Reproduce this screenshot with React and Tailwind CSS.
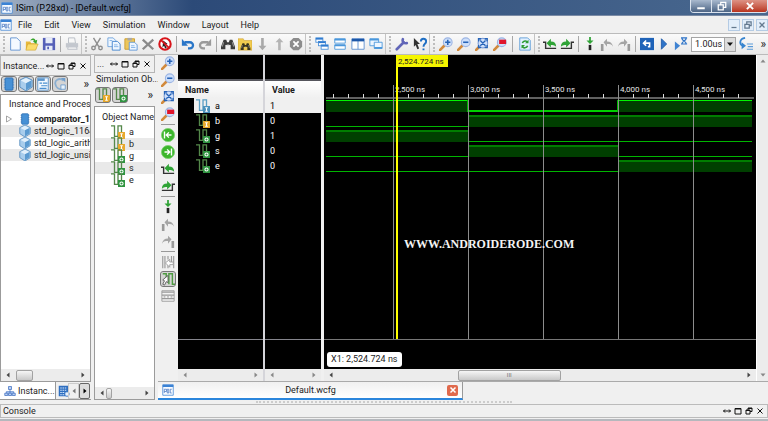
import React from 'react';
import clsx from 'clsx';

const Icon = ({ children, className = 'size-[14px]' }) => (
  <svg viewBox="0 0 16 16" className={clsx('shrink-0', className)} fill="none" aria-hidden="true">
    {children}
  </svg>
);

const Binoculars = ({ color = '#3c3c3c' }) => (
  <>
    <path d="M3 3h3l1 3h2l1-3h3l3 8v3h-5V9H5v5H0v-3z" fill={color} />
    <path d="M3 6l-1.500 5M13 6l1.500 5M6.500 9h3" stroke="#aaa" />
  </>
);

const Lens = ({ children }) => (
  <>
    <path d="M1 15l5-5" stroke="#d28a3c" strokeWidth="3" strokeLinecap="round" />
    <circle cx="10" cy="6" r="5" fill="#cfe0fa" stroke="#9bb4e4" strokeWidth="1.200" />
    {children}
  </>
);

const Windows = () => (
  <>
    {[[1, 1], [4, 5], [7, 9]].map(([x, y]) => (
      <g key={x}>
        <rect x={x} y={y} width="8" height="5" fill="#fff" stroke="#4a90d9" />
        <path d={`M${x} ${y + 1}h8`} stroke="#2f7bd0" strokeWidth="2" />
      </g>
    ))}
  </>
);

const icons = {
  newFile: (
    <path d="M3 1h7l4 4v10H3z" fill="#f4f9ff" stroke="#5b8fd0" />
  ),
  open: (
    <>
      <path d="M1 5h5l1 2h6v7H1z" fill="#e8b93c" />
      <path d="M3 8h12l-3 7H1z" fill="#fbdc6b" stroke="#c79a25" strokeWidth=".6" />
      <path d="M6 4c2-3 5-3 6 0l2-1-1 5-4-3 1.500-.5C9.500 3 8 3 6 4z" fill="#3aa52c" />
    </>
  ),
  save: (
    <>
      <path d="M1 1h14v14H1z" fill="#5660b8" />
      <path d="M4 1h8v6H4zM4 10h8v5H4z" fill="#e6ebf8" />
      <path d="M6 11h2v3H6z" fill="#5660b8" />
    </>
  ),
  print: (
    <>
      <path d="M4 1h7l1 6H4zM4 10h8l2 4H3z" fill="#f7f7f7" stroke="#b5bac2" />
      <path d="M1 7h14v5H1z" fill="#c3c7ce" />
    </>
  ),
  cut: (
    <g stroke="#8e8e8e" strokeWidth="1.600">
      <path d="M4 1l6 10M12 1L6 11" />
      <circle cx="4" cy="12.500" r="2" />
      <circle cx="12" cy="12.500" r="2" />
    </g>
  ),
  copy: (
    <>
      <path d="M1 1h6l3 3v7H1z" fill="#eef6ff" stroke="#6ba0dc" />
      <path d="M6 5h6l3 3v7H6z" fill="#eef6ff" stroke="#3e80cc" />
      <path d="M8 9h4M8 11h5M3 4h3" stroke="#7fb0e6" />
    </>
  ),
  paste: (
    <>
      <path d="M1 2h11v12H1z" fill="#edc65a" stroke="#c99a2c" />
      <path d="M4 1h5v3H4z" fill="#a9a9a9" />
      <path d="M6 6h6l3 3v6H6z" fill="#eef6ff" stroke="#5b95d6" />
      <path d="M8 10h4M8 12h5" stroke="#7fb0e6" />
    </>
  ),
  remove: <path d="M2 3l12 11M14 3L2 14" stroke="#8a8a8a" strokeWidth="2.600" />,
  stop: (
    <>
      <circle cx="8" cy="8" r="6.500" fill="#fff" stroke="#d8151b" strokeWidth="2.400" />
      <path d="M6 4l5 4-3 .5 2 4-2 .5-1-3-2 2z" fill="#222" />
      <path d="M3.500 3.500l9 9" stroke="#d8151b" strokeWidth="2.200" />
    </>
  ),
  undo: (
    <>
      <path d="M4 6h6c5 0 5 7 0 7H8" stroke="#2a76c8" strokeWidth="2.600" />
      <path d="M1 2v8h7z" fill="#2a76c8" />
    </>
  ),
  redo: (
    <>
      <path d="M12 6H6c-5 0-5 7 0 7h2" stroke="#9a9a9a" strokeWidth="2.600" />
      <path d="M15 2v8H8z" fill="#9a9a9a" />
    </>
  ),
  find: <Binoculars />,
  findFolder: (
    <>
      <path d="M0 2h6l1 2h9v11H0z" fill="#f2cc4f" stroke="#c99a2c" strokeWidth=".6" />
      <g transform="translate(3 5) scale(.7)"><Binoculars color="#3a341c" /></g>
    </>
  ),
  down: <path d="M7 1h3v9h3l-4.500 5L4 10h3z" fill="#a9a9a9" />,
  up: <path d="M7 15h3V6h3L8.500 1 4 6h3z" fill="#b4b4b4" />,
  cancel: (
    <>
      <path d="M5 1h6l4 4v6l-4 4H5l-4-4V5z" fill="#8c8c8c" />
      <path d="M5 5l6 6M11 5l-6 6" stroke="#fff" strokeWidth="2" />
    </>
  ),
  cascade: <Windows />,
  tileRows: (
    <g fill="#fff" stroke="#4a97dc">
      <path d="M2 2h12v5H2zM2 9h12v5H2z" />
      <path d="M2 3h12M2 9.500h12" strokeWidth="2" />
    </g>
  ),
  tileCols: (
    <g fill="#fff" stroke="#5a8ed0">
      <path d="M1 2h14v12H1zM8 2v12" />
      <path d="M1 3.500h14" stroke="#1c57a8" strokeWidth="3" />
    </g>
  ),
  floatWin: (
    <g fill="#eef6ff" stroke="#4a97dc">
      <path d="M1 2h10v8H1z" />
      <path d="M6 6h9v7H6z" />
      <path d="M1 3h10M6 12.500h9" strokeWidth="2" />
    </g>
  ),
  wrench: (
    <path d="M2 14l8-8M9 2.500c-1 3 1 5 4.500 4.500" stroke="#6166b8" strokeWidth="3" strokeLinecap="round" />
  ),
  help: (
    <>
      <path d="M1 1l7 7H5l2 5-2 1-2-5-2 2z" fill="#333" />
      <path d="M9 5c0-4 6-4 6 0 0 3-3 2.500-3 6M12 13v2" stroke="#1f6fc4" strokeWidth="2.200" />
    </>
  ),
  zoomIn: <Lens><path d="M7 6h6M10 3v6" stroke="#2764b8" strokeWidth="1.800" /></Lens>,
  zoomOut: <Lens><path d="M7 6h6" stroke="#2764b8" strokeWidth="1.800" /></Lens>,
  zoomFit: (
    <>
      <path d="M1 15l3-3" stroke="#d28a3c" strokeWidth="3" strokeLinecap="round" />
      <circle cx="9" cy="7" r="5.500" fill="#cfe0fa" stroke="#5f86cc" />
      <path d="M6 4l6 6M12 4l-6 6M4 5V2h3M11 2h3v3M14 9v3h-3M4 9v3h3" stroke="#2764b8" strokeWidth="1.500" />
    </>
  ),
  zoomSel: <Lens><path d="M7 3h8v5H7z" fill="#e0142a" /></Lens>,
  refresh: (
    <>
      <path d="M2 1h9l3 3v11H2z" fill="#e3f1ff" stroke="#5b9bd8" />
      <path d="M5 7c1-3 5-3 6-1M11 10c-1 3-5 3-6 1" stroke="#2f9c35" strokeWidth="1.800" />
      <path d="M12 3v4H8zM4 13V9h4z" fill="#2f9c35" />
    </>
  ),
  prevEdge: (
    <>
      <path d="M0 6h3v7h12" stroke="#333" strokeWidth="1.600" />
      <path d="M4 7l5-5v3c4 0 6 2 6 6-2-2-4-2-6-2v3z" fill="#2fa336" />
    </>
  ),
  nextEdge: (
    <>
      <path d="M1 13h12V6h3" stroke="#333" strokeWidth="1.600" />
      <path d="M12 7L7 2v3C3 5 1 7 1 11c2-2 4-2 6-2v3z" fill="#2fa336" />
    </>
  ),
  marker: (
    <>
      <path d="M7 0h2v4h3L8 8 4 4h3z" fill="#2fa336" />
      <path d="M6.500 9h3v6h-3z" fill="#222" />
    </>
  ),
  prevMarker: (
    <>
      <path d="M1 8h3v8H1z" fill="#9a9a9a" />
      <path d="M4 6l4-4v3c4 0 6 2 7 6-2-3-4-3-7-3v3z" fill="#a5a5a5" />
    </>
  ),
  nextMarker: (
    <>
      <path d="M12 8h3v8h-3z" fill="#9a9a9a" />
      <path d="M12 6L8 2v3C4 5 2 7 1 11c2-3 4-3 7-3v3z" fill="#a5a5a5" />
    </>
  ),
  restart: (
    <>
      <path d="M0 1h16v14H0z" fill="#1f63b8" />
      <path d="M4 7h7v4H9M7 4L4 7l3 3" stroke="#fff" strokeWidth="1.800" />
    </>
  ),
  play: <path d="M5 2l6 6-6 6z" fill="#2f74c8" stroke="#1f5aa8" />,
  playFor: (
    <>
      <path d="M1 5l6 5-6 5z" fill="#3f83d2" />
      <path d="M8 1h7M8 8h7M9 1c0 4 5 3 5 7M14 1c0 4-5 3-5 7" stroke="#2f74c8" strokeWidth="1.400" />
    </>
  ),
  step: (
    <>
      <path d="M7 1C0 2 0 9 5 10" stroke="#3784cf" strokeWidth="2" />
      <path d="M3 6l5 4-5 4z" fill="#3784cf" />
      <path d="M9 8h7M10 11h6M9 14h7" stroke="#5a9bd9" strokeWidth="1.400" />
    </>
  ),
  goStart: (
    <>
      <circle cx="8" cy="8" r="7.500" fill="#3cb62c" stroke="#7fd071" />
      <path d="M4 4v8M12 8H6M9 5L6 8l3 3" stroke="#fff" strokeWidth="1.600" />
    </>
  ),
  goEnd: (
    <>
      <circle cx="8" cy="8" r="7.500" fill="#3cb62c" stroke="#7fd071" />
      <path d="M12 4v8M4 8h6M7 5l3 3-3 3" stroke="#fff" strokeWidth="1.600" />
    </>
  ),
  swap: (
    <>
      <path d="M2 1v14M4.500 1v14M12 1v7M14.500 1v14M8 1v4M8 11v4" stroke="#999" strokeWidth="1.300" />
      <path d="M5 9l5-4v3h4v3h-4v3z" fill="#fff" stroke="#999" />
    </>
  ),
  snap: (
    <>
      <path d="M2 2h4v4M9 14V2h4v12h3" stroke="#4d9a40" strokeWidth="1.600" />
      <path d="M8 4L2 9l2 1-2 4 2 1 2-4 2 1z" fill="#fff" stroke="#555" />
    </>
  ),
  table: (
    <>
      <path d="M1 2h14v12H1z" fill="#f3f3f3" stroke="#999" />
      <path d="M1 3.500h14M1 7h14M1 11h14" stroke="#999" strokeWidth="1.400" />
      <path d="M3 9h10" stroke="#bbb" strokeDasharray="2 2" strokeWidth="2" />
    </>
  ),
  chip: (
    <>
      <path d="M2 3h12M2 6h12M2 9h12M2 12h12" stroke="#8ab2dc" strokeWidth="1.400" />
      <rect x="3.500" y="1" width="9" height="14" rx="1" fill="#4791d6" stroke="#2a6cb0" />
    </>
  ),
  cube: (
    <>
      <path d="M8 0l7 3.500v8L8 16l-7-4.500v-8z" fill="#a9cdec" stroke="#4e87bb" />
      <path d="M8 1l6 3-6 3-6-3z" fill="#e2f0fb" />
      <path d="M8 7l6-3v7l-6 4z" fill="#5b9ad0" />
    </>
  ),
  list: (
    <>
      <path d="M2 1h12v14H2z" fill="#f1f8ff" stroke="#5b95cc" />
      <path d="M2 3h8" stroke="#5b95cc" strokeWidth="3" />
      <path d="M4 7h3M8 7h5M6 10h7M4 13h8" stroke="#4a8fd0" strokeWidth="1.400" />
    </>
  ),
  process: (
    <>
      <path d="M12 4C7 0 1 4 3 9c1 4 5 5 7 5" stroke="#8aaed0" strokeWidth="2" />
      <path d="M9 1h5v5z" fill="#6e9dcc" />
      <path d="M9 9h5v5H9z" fill="#e8f3fc" stroke="#6e9dcc" />
    </>
  ),
  hierarchy: (
    <g stroke="#3f6fc0" fill="#b9d0f4">
      <path d="M8 6v3M3 11V9h10v2" />
      <path d="M6 2h4v4H6zM1 11h4v3H1zM6 11h4v3H6zM11 11h4v3h-4zM8 9v2" />
    </g>
  ),
  grid: (
    <>
      <path d="M1 1h13v14H1z" fill="#2f6fc0" />
      <path d="M3 4h9M3 7h9M3 10h9M3 13h9" stroke="#d4e7fb" strokeDasharray="2 1" strokeWidth="1.600" />
      <circle cx="12" cy="12" r="3" fill="#e9f2fc" stroke="#2f6fc0" />
    </>
  ),
  wave: (
    <>
      <path d="M1 1h14v14H1z" fill="#f6faff" stroke="#3b82d4" />
      <path d="M1 2.500h14" stroke="#3b82d4" strokeWidth="3" />
      <path d="M3 12V7h3v3H3M7 12V7h2v5H7M13 7h-2v5h2" stroke="#4a78c0" />
    </>
  ),
};

// Signal glyph: a pulse with the port direction in a small badge
const SignalIcon = ({ kind }) => {
  const badge = { in: '#e8a92c', out: '#2f9440', sel: '#4c93bd' }[kind];
  const line = kind === 'sel' ? '#5b9fc4' : '#54884a';
  return (
    <Icon>
      <path d="M0 1h4v12h4V1h4v8" stroke={line} strokeWidth="1.500" />
      <rect x="8" y="8" width="8" height="8" fill={badge} />
      {kind === 'out' ? (
        <circle cx="12" cy="12" r="1.800" stroke="#fff" strokeWidth="1.200" />
      ) : (
        <path d="M10.500 10h3M12 10v4M10.500 14h3" stroke="#fff" strokeWidth="1.200" />
      )}
    </Icon>
  );
};

const ToolButton = ({ name, active, label }) => (
  <button
    type="button"
    aria-label={label || name}
    className={clsx(
      'flex shrink-0 items-center justify-center',
      active && 'rounded-xs bg-[#d4d4d4] outline outline-[#777]'
    )}
  >
    <Icon>{icons[name]}</Icon>
  </button>
);

const Sep = () => <span className="mx-px h-4 w-px shrink-0 bg-[#a8a8a8]" />;
const Grip = () => <span className="h-4 shrink-0 border-l-2 border-dotted border-[#bdbdbd]" />;

const ToolGroup = ({ items, wide }) => (
  <div
    className={clsx(
      'flex shrink-0 items-center border-r border-[#c4c4c4] pr-[2px] pl-[3px]',
      wide ? 'gap-1' : 'gap-[3px]'
    )}
  >
    <Grip />
    {items.map((item, i) =>
      item === '|' ? <Sep key={i} /> : <ToolButton key={i} name={item} />
    )}
  </div>
);

const DockButtons = () => (
  <div className="flex shrink-0 items-center gap-[3px]">
    {[
      ['Resize', 'M1 8h14M4 5L1 8l3 3M12 5l3 3-3 3'],
      ['Maximize', 'M2 3h12v11H2zM2 4h12'],
      ['Float', 'M6 6V2h8v7h-4M2 6h8v8H2zM2 7h8M6 3h8'],
      ['Close', 'M3 3l10 10M13 3L3 13'],
    ].map(([label, d]) => (
      <button key={label} type="button" aria-label={label}>
        <Icon className="size-[8px]">
          <path d={d} stroke="#111" strokeWidth="2" />
        </Icon>
      </button>
    ))}
  </div>
);

const Arrow = ({ dir, color = '#444' }) => {
  const d = {
    left: 'M11 3v10L5 8z',
    right: 'M5 3v10l6-5z',
    up: 'M3 11h10L8 5z',
    down: 'M3 5h10l-5 6z',
  }[dir];
  return (
    <button type="button" aria-label={`Scroll ${dir}`} className="flex shrink-0">
      <Icon className="size-[8px]"><path d={d} fill={color} /></Icon>
    </button>
  );
};

const HScroll = ({ thumb, color }) => (
  <div className="flex h-3 shrink-0 items-center bg-[#ececec] px-[3px]">
    <Arrow dir="left" color={color} />
    <div className="flex h-full flex-1 items-center">{thumb}</div>
    <Arrow dir="right" color={color} />
  </div>
);

const Thumb = ({ className, children }) => (
  <span
    className={clsx(
      'flex h-[11px] items-center justify-center rounded-xs border border-[#a2a2a2] bg-linear-to-b from-[#f6f6f6] to-[#c9c9c9]',
      className
    )}
  >
    {children}
  </span>
);

const instances = [
  { name: 'comparator_1', icon: 'chip', bold: true },
  { name: 'std_logic_1164', icon: 'cube' },
  { name: 'std_logic_arith', icon: 'cube' },
  { name: 'std_logic_unsi', icon: 'cube' },
];

const signals = [
  { name: 'a', kind: 'in', value: 1, bits: [1, 0, 1] },
  { name: 'b', kind: 'in', value: 0, bits: [0, 1, 1] },
  { name: 'g', kind: 'out', value: 1, bits: [1, 0, 0] },
  { name: 's', kind: 'out', value: 0, bits: [0, 1, 0] },
  { name: 'e', kind: 'out', value: 0, bits: [0, 0, 1] },
];

const InstancePanel = () => (
  <section className="flex w-[91px] shrink-0 flex-col">
    <div className="flex h-[21px] items-center justify-between border border-[#b5b5b5] pr-[3px] pl-[2px]">
      <span>Instance...</span>
      <DockButtons />
    </div>
    <div className="flex h-4 items-center justify-between px-[2px]">
      <div className="flex gap-[3px]">
        {['chip', 'cube', 'list', 'process'].map((n) => (
          <ToolButton key={n} name={n} active />
        ))}
      </div>
      <span className="text-[12px]">»</span>
    </div>
    <div className="mt-[2px] flex min-h-0 flex-1 flex-col overflow-hidden border border-[#9b9b9b] bg-white">
      <h2 className="flex h-[18px] items-center pl-2 whitespace-nowrap">Instance and Process</h2>
      <ul className="flex-1">
        {instances.map((item, i) => (
          <li
            key={item.name}
            className={clsx(
              'flex h-3 items-center whitespace-nowrap',
              i % 2 === 1 && 'bg-[#e9e9e9]',
              item.bold && 'font-bold'
            )}
          >
            <span className="flex w-[18px] shrink-0 pl-1">
              {item.bold && (
                <Icon className="size-[8px]"><path d="M3 2l10 6-10 6z" stroke="#888" strokeWidth="1.500" /></Icon>
              )}
            </span>
            <Icon className="size-[12px]">{icons[item.icon]}</Icon>
            <span className="pl-[3px]">{item.name}</span>
          </li>
        ))}
      </ul>
      <HScroll thumb={<Thumb className="ml-1 w-[17px]" />} />
    </div>
    <div className="flex h-[18px] shrink-0 items-center border-b border-[#999]">
      <button type="button" className="flex h-full w-[55px] items-center gap-[2px] bg-white pl-1">
        <Icon className="size-[12px]">{icons.hierarchy}</Icon>
        Instanc...
      </button>
      <button type="button" aria-label="Memory" className="flex h-full w-[13px] items-center border-l border-[#999] pl-[2px]">
        <Icon className="size-[12px]">{icons.grid}</Icon>
      </button>
      <span className="flex h-4 w-[11px] items-center justify-center border border-[#ccc]"><Arrow dir="left" color="#777" /></span>
      <span className="flex h-4 w-[11px] items-center justify-center rounded-xs border border-[#666] bg-[#ddd]"><Arrow dir="right" color="#000" /></span>
    </div>
  </section>
);

const ObjectPanel = () => (
  <section className="flex w-[61px] shrink-0 flex-col">
    <div className="flex h-[18px] items-center justify-between border border-[#b5b5b5] pr-[3px] pl-[2px]">
      <span>...</span>
      <DockButtons />
    </div>
    <span className="pl-[2px] whitespace-nowrap">Simulation Ob...</span>
    <div className="mt-px flex h-[18px] items-center justify-between px-[2px]">
      <div className="flex gap-[3px]">
        {['in', 'out'].map((kind) => (
          <button key={kind} type="button" aria-label={kind} className="rounded-xs bg-[#d4d4d4] outline outline-[#777]">
            <SignalIcon kind={kind} />
          </button>
        ))}
      </div>
      <span className="text-[12px]">»</span>
    </div>
    <div className="mt-[2px] flex min-h-0 flex-1 flex-col overflow-hidden border border-[#9b9b9b] bg-white">
      <h2 className="flex h-[19px] items-center pl-[7px] whitespace-nowrap">Object Name</h2>
      <ul className="flex-1">
        {signals.map((s, i) => (
          <li key={s.name} className={clsx('flex h-3 items-center gap-1 pl-[16px]', i % 2 === 1 && 'bg-[#e9e9e9]')}>
            <SignalIcon kind={s.kind} />
            {s.name}
          </li>
        ))}
      </ul>
      <HScroll thumb={<Thumb className="w-[6px]" />} />
    </div>
  </section>
);

const sideTools = [
  'zoomIn', 'zoomOut', 'zoomFit', 'zoomSel', '|',
  'goStart', 'goEnd', 'prevEdge', 'nextEdge', '|',
  'marker', 'prevMarker', 'nextMarker', '|',
  'swap', 'snap', 'table',
];

const SideToolbar = () => (
  <div className="flex w-5 shrink-0 flex-col items-center gap-[3px] bg-[#f0f0f0] pt-px">
    {sideTools.map((t, i) =>
      t === '|' ? (
        <span key={i} className="h-px w-[14px] bg-[#999]" />
      ) : (
        <ToolButton key={i} name={t} active={t === 'snap'} />
      )
    )}
  </div>
);

const Column = ({ title, className, children }) => (
  <div className={clsx('flex shrink-0 flex-col', className)}>
    <div className="h-[26px] border-b-2 border-[#55555c] bg-black" />
    <div className="flex h-[17px] items-center bg-linear-to-b from-white to-[#f0f0f0] pl-[7px] font-bold">
      {title}
    </div>
    <div className="flex-1 bg-black text-white">{children}</div>
    <div className="h-[30px] border-t border-[#85858c] bg-black" />
    <HScroll color="#888" />
  </div>
);

const Splitter = () => <div className="w-[2px] shrink-0 bg-[#d5d5da]" />;

// Horizontal positions inside the trace area, in pixels
const EDGES = [0, 142, 292, 426];
const GRID = [
  { x: 67, label: '2,500 ns' },
  { x: 142, label: '3,000 ns' },
  { x: 217, label: '3,500 ns' },
  { x: 292, label: '4,000 ns' },
  { x: 367, label: '4,500 ns' },
];
const TICKS = Array.from({ length: 28 }, (_, i) => 7 + i * 15);
const CURSOR_X = 70;

const Trace = ({ bits, row, selected }) => {
  const top = 45 + row * 15;
  const bright = selected ? '#00f500' : '#007d00';
  return (
    <g>
      {bits.map((bit, i) => {
        const x = EDGES[i];
        const w = EDGES[i + 1] - x;
        return bit ? (
          <g key={i}>
            <rect x={x} y={top} width={w} height="12" fill="#003f00" />
            <rect x={x} y={top} width={w} height={selected ? 1 : 2} fill={bright} />
          </g>
        ) : (
          <rect
            key={i}
            x={x}
            y={selected ? top + 10 : top + 11}
            width={w}
            height={selected ? 2 : 1}
            fill={selected ? '#00d000' : '#00b400'}
          />
        );
      })}
      {selected && <path d={`M141.5 ${top}v12M291.5 ${top}v12`} stroke="#00b400" />}
    </g>
  );
};

const WaveView = () => (
  <div className="flex min-w-0 flex-1 flex-col bg-black">
    <div className="flex min-h-0 flex-1 pl-[2px]">
      <svg className="h-full w-full" shapeRendering="crispEdges">
        <rect x="0" y="42" width="428" height="2" fill="#606060" />
        {TICKS.map((x) => (
          <rect key={x} x={x} y="39" width="1" height="4" fill="#ddd" />
        ))}
        {signals.map((s, i) => (
          <Trace key={s.name} bits={s.bits} row={i} selected={i === 0} />
        ))}
        {GRID.map(({ x, label }) => (
          <g key={x}>
            <line x1={x + 0.5} x2={x + 0.5} y1="30" y2="100%" stroke="#8c8c8c" />
            <text x={x + 2} y="37" fill="#e4e4e4" className="text-[8px]">{label}</text>
          </g>
        ))}
        <line x1={CURSOR_X + 1} x2={CURSOR_X + 1} y1="12" y2="100%" stroke="#ffff00" strokeWidth="2" />
        <rect x={CURSOR_X} y="0" width="52" height="12" fill="#f5f500" />
        <text x={CURSOR_X + 2} y="9" fill="#222" className="text-[8px]">2,524.724 ns</text>
        <text x="78" y="193" fill="#f4f4f4" className="font-['Liberation_Serif',serif] text-[12px] font-bold">
          WWW.ANDROIDERODE.COM
        </text>
      </svg>
    </div>
    <div className="flex h-[30px] shrink-0 items-center border-t border-[#777] pt-[9px] pl-[3px]">
      <span className="rounded-[3px] bg-white px-[4px] text-[9px] leading-[15px] text-[#222]">X1: 2,524.724 ns</span>
    </div>
    <HScroll
      thumb={
        <>
          <span className="w-[30%]" />
          <Thumb className="w-1/4 text-[6px] text-[#777]">III</Thumb>
        </>
      }
    />
  </div>
);

const Waveform = () => (
  <div className="flex min-w-0 flex-1">
    <Column title="Name" className="w-[85px]">
      <ul>
        {signals.map((s, i) => (
          <li key={s.name} className="flex h-[15px] pl-4">
            <span className={clsx('flex flex-1 items-center gap-[5px] pl-[2px]', i === 0 && 'bg-[#f0f0f0] text-black')}>
              <SignalIcon kind={i === 0 ? 'sel' : s.kind} />
              {s.name}
            </span>
          </li>
        ))}
      </ul>
    </Column>
    <Splitter />
    <Column title="Value" className="w-14">
      <ul>
        {signals.map((s, i) => (
          <li key={s.name} className={clsx('flex h-[15px] items-center pl-[5px]', i === 0 && 'bg-[#f0f0f0] text-black')}>
            {s.value}
          </li>
        ))}
      </ul>
    </Column>
    <div className="w-[3px] shrink-0 bg-[#f0f0f0]" />
    <WaveView />
    <div className="flex w-3 shrink-0 flex-col items-center justify-between border-l border-white bg-[#ececec] py-[2px]">
      <Arrow dir="up" color="#888" />
      <Arrow dir="down" color="#888" />
    </div>
  </div>
);

const TitleBar = () => (
  <header className="flex h-4 shrink-0 items-center justify-between border-b border-[#7b8ba5] bg-linear-to-r from-[#a3b1c4] from-0% via-[#2c4a78] via-25% to-[#49688f] pl-[1px]">
    <div className="flex items-center gap-[3px]">
      <Icon className="size-[12px]">{icons.wave}</Icon>
      <h1 className="text-[9px] text-black">ISim (P.28xd) - [Default.wcfg]</h1>
    </div>
    <div className="flex h-[13px] self-start overflow-hidden rounded-b-[4px] border border-t-0 border-[#dbe3ee]">
      <button type="button" aria-label="Minimize" className="flex w-[21px] items-center justify-center border-r border-[#dbe3ee] bg-linear-to-b from-[#a9b9ce] to-[#4d6585]">
        <Icon className="size-[10px]"><path d="M2 10h12v3H2z" fill="#fff" /></Icon>
      </button>
      <button type="button" aria-label="Restore" className="flex w-5 items-center justify-center border-r border-[#dbe3ee] bg-linear-to-b from-[#a9b9ce] to-[#4d6585]">
        <Icon className="size-[10px]"><path d="M6 5V2h8v8h-3M2 6h8v8H2z" stroke="#fff" strokeWidth="2" /></Icon>
      </button>
      <button type="button" aria-label="Close" className="flex w-[35px] items-center justify-center bg-linear-to-b from-[#dd9285] to-[#b8321c]">
        <Icon className="size-[10px]"><path d="M3 3l10 10M13 3L3 13" stroke="#fff" strokeWidth="3" /></Icon>
      </button>
    </div>
  </header>
);

const MenuBar = () => (
  <div className="flex h-[17px] shrink-0 items-center justify-between bg-[#f0f0f0]">
    <nav className="flex items-center">
      <Icon className="size-[12px]">{icons.wave}</Icon>
      <ul className="flex gap-3 pl-[6px]">
        {['File', 'Edit', 'View', 'Simulation', 'Window', 'Layout', 'Help'].map((m) => (
          <li key={m}><a href="#">{m}</a></li>
        ))}
      </ul>
    </nav>
    <div className="flex gap-[2px]">
      {[
        ['Minimize window', 'M4 12h8'],
        ['Restore window', 'M6 6V3h7v6h-3M3 7h7v6H3z'],
        ['Close window', 'M4 4l8 8M12 4l-8 8'],
      ].map(([label, d]) => (
        <button key={label} type="button" aria-label={label} className="flex size-3 items-center justify-center border border-[#b4cbe4] bg-[#e3eefa]">
          <Icon className="size-[10px]"><path d={d} stroke="#64798f" strokeWidth="2" /></Icon>
        </button>
      ))}
    </div>
  </div>
);

const Toolbar = () => (
  <div className="flex h-[22px] shrink-0 items-stretch overflow-hidden border-y border-[#bbb] bg-linear-to-b from-[#fafafa] to-[#e9e9e9]">
    <ToolGroup items={['newFile', 'open', 'save', '|', 'print']} />
    <ToolGroup
      items={['cut', 'copy', 'paste', 'remove', 'stop', '|', 'undo', 'redo', '|', 'find', 'findFolder', 'down', 'up', 'cancel']}
    />
    <ToolGroup wide items={['cascade', 'tileRows', 'tileCols', 'floatWin']} />
    <ToolGroup wide items={['wrench', 'help']} />
    <ToolGroup wide items={['zoomIn', 'zoomOut', 'zoomFit', 'zoomSel', '|', 'refresh']} />
    <div className="flex flex-1 items-center gap-[3px] pl-[3px]">
      <Grip />
      <ToolButton name="prevEdge" />
      <ToolButton name="nextEdge" />
      <Sep />
      <ToolButton name="marker" />
      <ToolButton name="prevMarker" />
      <ToolButton name="nextMarker" />
      <Sep />
      <ToolButton name="restart" />
      <ToolButton name="play" />
      <ToolButton name="playFor" />
      <div className="flex h-[15px] border border-[#a5a5a5] bg-white">
        <select aria-label="Run time" className="w-8 appearance-none pl-[3px] text-[9px]">
          <option>1.00us</option>
        </select>
        <span className="flex w-[11px] items-center justify-center border-l border-[#a5a5a5] bg-[#ddd]">
          <Icon className="size-[8px]"><path d="M2 5h12l-6 7z" fill="#111" /></Icon>
        </span>
      </div>
      <ToolButton name="step" />
      <span className="ml-auto pr-[2px] text-[12px]">»</span>
    </div>
  </div>
);

export default function App() {
  return (
    <div className="flex h-screen flex-col overflow-hidden bg-[#f0f0f0] font-['Roboto',sans-serif] text-[9px] leading-[12px] text-[#1c1c1c]">
      <TitleBar />
      <MenuBar />
      <Toolbar />
      <main className="flex min-h-0 flex-1">
        <InstancePanel />
        <div className="w-[3px] shrink-0" />
        <ObjectPanel />
        <div className="w-[3px] shrink-0" />
        <div className="flex min-w-0 flex-1 flex-col">
          <div className="flex min-h-0 flex-1">
            <SideToolbar />
            <Waveform />
          </div>
          <div className="flex h-[19px] shrink-0 border-t border-[#aaa]">
            <div className="flex w-1/2 items-center border-r border-b-2 border-r-[#999] border-b-[#2b86dc] bg-linear-to-b from-[#f0f0f0] to-white px-1">
              <Icon className="size-[12px]">{icons.wave}</Icon>
              <span className="flex-1 text-center">Default.wcfg</span>
              <button type="button" aria-label="Close tab" className="flex size-[11px] items-center justify-center rounded-xs bg-[#e0694c]">
                <Icon className="size-[8px]"><path d="M3 3l10 10M13 3L3 13" stroke="#fff" strokeWidth="3" /></Icon>
              </button>
            </div>
          </div>
        </div>
      </main>
      <div className="mx-auto my-[1px] w-64 shrink-0 border-t-2 border-dotted border-[#ccc]" />
      <footer className="flex h-[14px] shrink-0 items-center justify-between border border-[#bbb] pr-[3px] pl-[2px]">
        <h2>Console</h2>
        <DockButtons />
      </footer>
      <div className="h-[3px] shrink-0 border-b-2 border-[#b5b8bd]" />
    </div>
  );
}
